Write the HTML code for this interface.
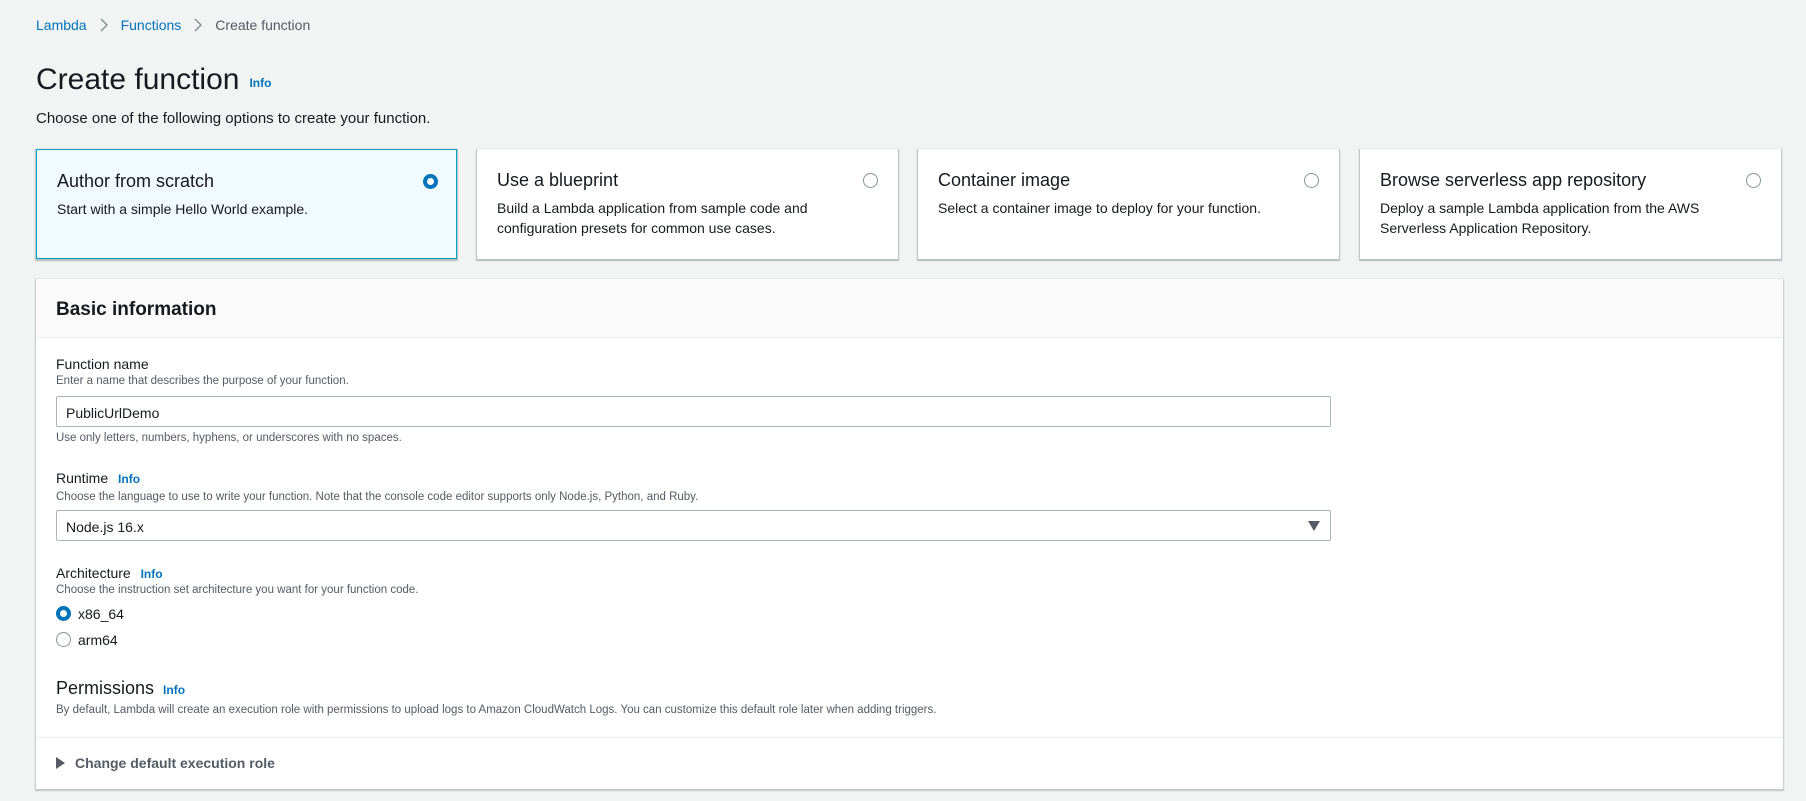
<!DOCTYPE html>
<html><head><meta charset="utf-8"><style>
*{box-sizing:border-box;margin:0;padding:0}
body{width:1806px;height:801px;background:#f2f3f3;font-family:"Liberation Sans",sans-serif;color:#16191f;position:relative;overflow:hidden}
.a{position:absolute;white-space:nowrap;line-height:1}
.blue{color:#0073bb}
.info{color:#0073bb;font-weight:bold;font-size:12px}
.card{position:absolute;top:149px;height:110px;width:421px;background:#fff;box-shadow:0 1px 1px 1px rgba(0,28,36,.25)}
.card.sel{background:#f1faff;border:1px solid #00a1c9}
.card h3{position:absolute;left:20px;top:21px;font-size:18px;font-weight:normal}
.card p{position:absolute;left:20px;top:49px;font-size:14px;line-height:20px;width:350px}
.rad{position:absolute;width:15px;height:15px;border-radius:50%;border:1px solid #879596;background:#fff}
.rad.on{border:4px solid #0073bb}
.card .rad{left:386px;top:24px}
.panel{position:absolute;left:36px;top:279px;width:1747px;height:510px;background:#fff;box-shadow:0 1px 1px 1px rgba(0,28,36,.2)}
.hdr{position:absolute;left:0;top:0;width:100%;height:59px;background:#fafafa;border-bottom:1px solid #eaeded}
.lbl{font-size:14px}
.hint{font-size:11.5px;color:#545b64}
.inp{position:absolute;left:20px;width:1275px;height:31px;border:1px solid #aab7b8;border-radius:2px;background:#fff;font-size:14px;padding:8px 9px}
.bc{display:inline-block;vertical-align:middle}
</style></head><body>
<div class="a" style="left:36px;top:17px;font-size:14px">
<span class="blue bc">Lambda</span><svg class="bc" style="margin:0 12px" width="10" height="16"><path d="M2 2l6 6-6 6" stroke="#879596" stroke-width="1.5" fill="none"/></svg><span class="blue bc">Functions</span><svg class="bc" style="margin:0 12px" width="10" height="16"><path d="M2 2l6 6-6 6" stroke="#879596" stroke-width="1.5" fill="none"/></svg><span class="bc" style="color:#545b64">Create function</span></div>
<div class="a" style="left:36px;top:65px;font-size:30px">Create function<span class="info" style="margin-left:10px;vertical-align:2px">Info</span></div>
<div class="a" style="left:36px;top:111px;font-size:15px">Choose one of the following options to create your function.</div>

<div class="card sel" style="left:36px"><h3>Author from scratch</h3><p>Start with a simple Hello World example.</p><div class="rad on"></div></div>
<div class="card" style="left:477px"><h3>Use a blueprint</h3><p>Build a Lambda application from sample code and configuration presets for common use cases.</p><div class="rad"></div></div>
<div class="card" style="left:918px"><h3>Container image</h3><p>Select a container image to deploy for your function.</p><div class="rad"></div></div>
<div class="card" style="left:1360px"><h3>Browse serverless app repository</h3><p>Deploy a sample Lambda application from the AWS Serverless Application Repository.</p><div class="rad"></div></div>

<div class="panel">
<div class="hdr"><div class="a" style="left:20px;top:21px;font-size:19px;font-weight:bold">Basic information</div></div>
<div class="a lbl" style="left:20px;top:78px">Function name</div>
<div class="a hint" style="left:20px;top:97px">Enter a name that describes the purpose of your function.</div>
<div class="inp" style="top:117px">PublicUrlDemo</div>
<div class="a hint" style="left:20px;top:154px">Use only letters, numbers, hyphens, or underscores with no spaces.</div>
<div class="a lbl" style="left:20px;top:192px">Runtime <span class="info" style="margin-left:6px">Info</span></div>
<div class="a hint" style="left:20px;top:213px">Choose the language to use to write your function. Note that the console code editor supports only Node.js, Python, and Ruby.</div>
<div class="inp" style="top:231px">Node.js 16.x<svg style="position:absolute;right:10px;top:10px" width="12" height="10"><path d="M0 0h12L6 10z" fill="#545b64"/></svg></div>
<div class="a lbl" style="left:20px;top:287px">Architecture <span class="info" style="margin-left:6px">Info</span></div>
<div class="a hint" style="left:20px;top:306px">Choose the instruction set architecture you want for your function code.</div>
<div class="rad on" style="left:20px;top:327px"></div><div class="a lbl" style="left:42px;top:328px">x86_64</div>
<div class="rad" style="left:20px;top:353px"></div><div class="a lbl" style="left:42px;top:354px">arm64</div>
<div class="a" style="left:20px;top:400px;font-size:18px">Permissions <span class="info" style="margin-left:4px">Info</span></div>
<div class="a hint" style="left:20px;top:426px">By default, Lambda will create an execution role with permissions to upload logs to Amazon CloudWatch Logs. You can customize this default role later when adding triggers.</div>
<div class="a" style="left:0;top:458px;width:100%;height:1px;background:#eaeded"></div>
<svg class="a" style="left:20px;top:478px" width="10" height="12"><path d="M0 0l9 6-9 6z" fill="#545b64"/></svg>
<div class="a" style="left:39px;top:477px;font-size:14px;font-weight:bold;color:#545b64">Change default execution role</div>
</div>
</body></html>
